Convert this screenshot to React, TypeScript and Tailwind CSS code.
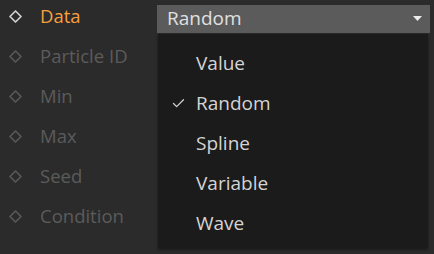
import { Check } from "lucide-react";

const rows = [
  { label: "Data", active: true },
  { label: "Particle ID", active: false },
  { label: "Min", active: false },
  { label: "Max", active: false },
  { label: "Seed", active: false },
  { label: "Condition", active: false },
];

const options = ["Value", "Random", "Spline", "Variable", "Wave"];

const Diamond = ({ color }: { color: string }) => (
  <svg width="13" height="13" viewBox="0 0 13 13" fill="none">
    <path d="M6.5 1 L12 6.5 L6.5 12 L1 6.5 Z" stroke={color} strokeWidth="1.7" strokeLinejoin="round" />
  </svg>
);

const App = () => {
  return (
    <div
      className="relative w-[434px] h-[254px] bg-[#2b2b2b] flex overflow-hidden"
      style={{ fontFamily: "'Open Sans', 'Noto Sans', sans-serif" }}
    >
      <div className="w-[157px] flex flex-col gap-4 pt-1">
        {rows.map((r) => (
          <div key={r.label} className="h-6 flex items-center">
            <div className="w-[40px] pl-[9px] flex items-center">
              <Diamond color={r.active ? "#cfcfcf" : "#585858"} />
            </div>
            <span
              className={
                r.active
                  ? "text-[18.5px] font-medium text-[#f7a040] leading-none"
                  : "text-[18.5px] font-medium text-[#5b5b5b] leading-none"
              }
            >
              {r.label}
            </span>
          </div>
        ))}
      </div>

      <div className="flex-1 pt-[5px] pr-1">
        <div className="h-7 bg-[#5b5b5b] flex items-center justify-between pl-[10px] pr-[8px] pb-[2px]">
          <span className="text-[19px] font-medium text-[#e0e0e0] leading-none">Random</span>
          <svg width="9" height="5" viewBox="0 0 9 5">
            <path d="M0 0 H9 L4.5 5 Z" fill="#ececec" />
          </svg>
        </div>
      </div>

      <div className="absolute left-[158px] top-[34px] w-[270px] h-[214px] bg-[#1b1b1b] pt-[9px] shadow-[0_2px_3px_rgba(0,0,0,0.4)]">
        {options.map((o) => (
          <div key={o} className="h-10 flex items-center">
            <div className="w-[38px] pl-[13px] flex items-center">
              {o === "Random" && <Check size={15} strokeWidth={2} color="#d0d0d0" />}
            </div>
            <span className="text-[19px] font-medium text-[#d4d4d4] leading-none">{o}</span>
          </div>
        ))}
      </div>
    </div>
  );
};

export default App;
